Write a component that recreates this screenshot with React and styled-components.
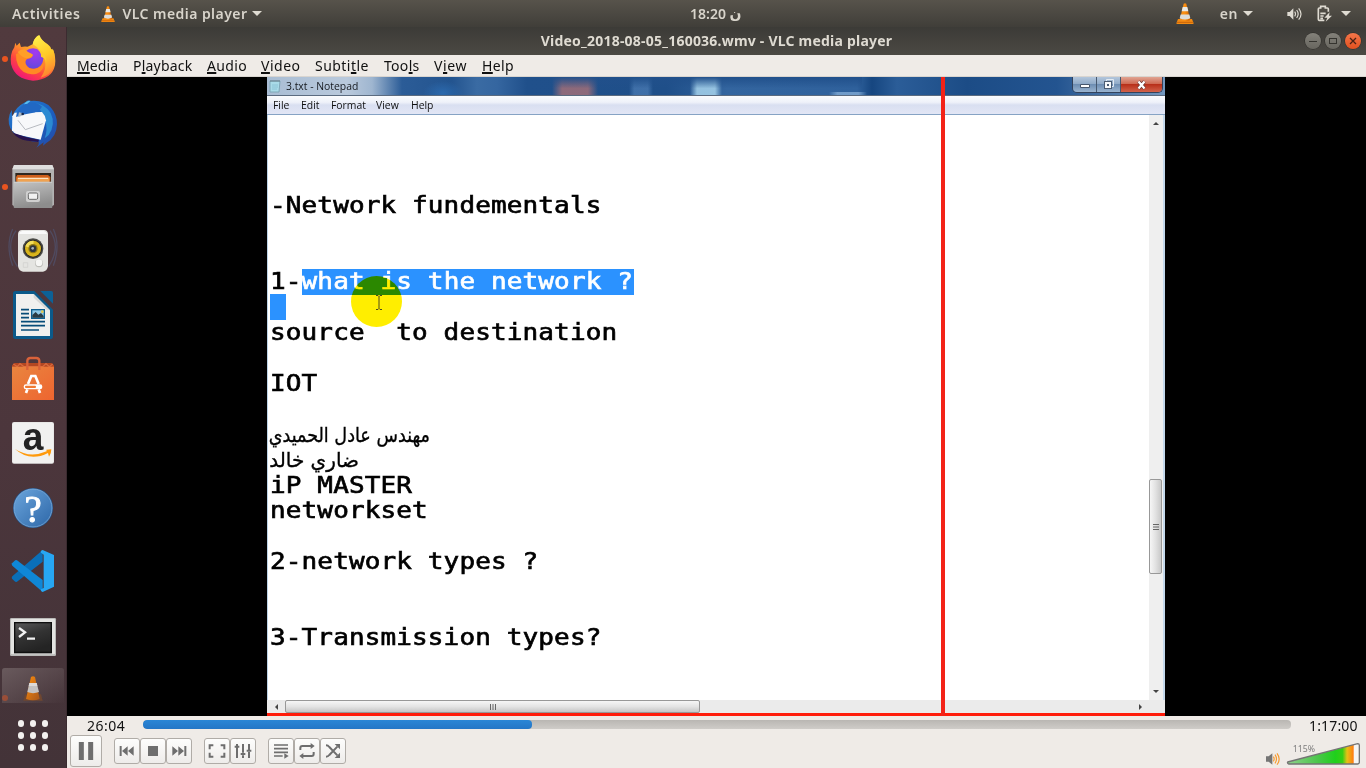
import React from "react";
import styled, { createGlobalStyle, css } from "styled-components";

const ui = '"Noto Sans", "Open Sans", "DejaVu Sans", sans-serif';

const GlobalStyle = createGlobalStyle`
  * { box-sizing: border-box; }
  body { margin: 0; overflow: hidden; background: #000; font-family: ${ui}; }
  svg { display: block; flex: none; }
`;

const Desktop = styled.div`
  width: 1366px;
  height: 768px;
  display: flex;
  flex-direction: column;
`;

/* ---------- top panel ---------- */
const TopPanel = styled.header`
  height: 27px;
  flex: none;
  display: grid;
  grid-template-columns: 690px 54px 1fr;
  align-items: center;
  background: linear-gradient(#57534b, #403e39);
  color: #d8d4cb;
  font-size: 14px;
  font-weight: 600;
`;

const PanelSide = styled.div`
  display: flex;
  align-items: center;
  height: 27px;
  padding-left: ${(p) => (p.$end ? 0 : "12px")};
  padding-right: ${(p) => (p.$end ? "15px" : 0)};
  justify-content: ${(p) => (p.$end ? "flex-end" : "flex-start")};
`;

const PanelText = styled.span`
  white-space: pre;
  letter-spacing: ${(p) => p.$track || 0}px;
  margin-left: ${(p) => p.$gap || 0}px;
  font-size: ${(p) => p.$size || 14}px;
`;

const Caret = styled.i`
  width: 0;
  height: 0;
  margin-left: ${(p) => p.$gap}px;
  border: 5px solid transparent;
  border-top-color: #dfdbd2;
  border-bottom: 0;
`;

const IconSlot = styled.span`
  display: flex;
  margin-left: ${(p) => p.$gap}px;
`;

/* ---------- body ---------- */
const Body = styled.div`
  flex: 1;
  min-height: 0;
  display: flex;
`;

const Dock = styled.nav`
  width: 67px;
  flex: none;
  display: flex;
  flex-direction: column;
  background: linear-gradient(#513a3e, #4c363c 55%, #433338);
  border-right: 1px solid #3b2b30;
`;

const DockItem = styled.div`
  position: relative;
  height: ${(p) => p.$h || 64}px;
  flex: none;
  padding-left: 1px;
  ${(p) =>
    p.$running &&
    css`
      &::before {
        content: "";
        position: absolute;
        left: 2px;
        top: ${p.$running}px;
        width: 6px;
        height: 6px;
        border-radius: 50%;
        background: #e95420;
        opacity: ${p.$h ? 0.45 : 1};
      }
    `}
`;

const AppGrid = styled.div`
  display: grid;
  grid-template-columns: repeat(3, 7px);
  grid-auto-rows: 7px;
  gap: 5px;
  padding: 17px 0 0 17.5px;
`;

const GridDot = styled.i`
  width: 6.5px;
  height: 6.5px;
  border-radius: 50%;
  background: #f3f1ef;
`;

const Window = styled.main`
  flex: 1;
  min-width: 0;
  display: flex;
  flex-direction: column;
`;

const TitleBar = styled.div`
  height: 28px;
  flex: none;
  display: grid;
  grid-template-columns: 1fr auto 1fr;
  align-items: center;
  background: linear-gradient(#3c3b37, #4b4943);
  color: #dfdbd2;
  font-size: 14px;
  font-weight: 700;
`;

const Title = styled.span`
  letter-spacing: 0.22px;
  font-size: 14px;
  white-space: nowrap;
  padding-bottom: 2px;
`;

const WindowButtons = styled.div`
  display: flex;
  justify-content: flex-end;
  gap: 4px;
  padding-right: 5px;
`;

const RoundButton = styled.span`
  width: 16px;
  height: 16px;
  border-radius: 50%;
  background: ${(p) => (p.$close ? "linear-gradient(#f4764a, #e2511f)" : "linear-gradient(#83817a, #68665f)")};
  box-shadow: 0 0 0 0.5px #2b2a27;
`;

const MenuBar = styled.div`
  height: 22px;
  flex: none;
  display: flex;
  gap: 14px;
  padding-left: 10px;
  align-items: center;
  background: #efebe7;
  border-bottom: 1px solid #d9d5d0;
  color: #101010;
  font-size: 14px;
`;

const MenuItem = styled.span`
  width: ${(p) => p.$w}px;
  white-space: nowrap;
  letter-spacing: ${(p) => p.$track || 0}px;
  u { text-underline-offset: 1px; text-decoration-thickness: 1.5px; text-decoration-skip-ink: none; }
`;

/* ---------- video ---------- */
const Stage = styled.section`
  flex: 1;
  min-height: 0;
  background: #000;
  padding-left: 200px;
`;

const Frame = styled.div`
  position: relative;
  width: 898px;
  height: 639px;
  display: flex;
  flex-direction: column;
  background: #fff;
  border-bottom: 3px solid #ff1c0a;
`;

const GuideLine = styled.i`
  position: absolute;
  left: 674px;
  top: 0;
  width: 4px;
  height: 639px;
  background: #f32318;
`;

const smudge = (color, x, y, w) =>
  `linear-gradient(90deg, transparent, ${color} 22%, ${color} 78%, transparent) ${x}px ${y}px / ${w}px 19px no-repeat`;

const PadTitle = styled.div`
  height: 19px;
  flex: none;
  display: flex;
  align-items: center;
  padding-left: 2px;
  gap: 5px;
  font: 10.4px "Open Sans", sans-serif;
  color: #15191f;
  border-bottom: 1px solid #5b6b80;
  background:
    linear-gradient(rgba(33, 80, 139, 1), rgba(33, 80, 139, 0) 60%) 285px 0 / 310px 19px no-repeat,
    ${smudge("rgba(160, 110, 120, .85)", 285, 0, 46)},
    ${smudge("rgba(160, 205, 232, .9)", 423, 0, 32)},
    ${smudge("rgba(110, 160, 215, .4)", 362, 0, 24)},
    ${smudge("rgba(140, 180, 220, .7)", 562, 15, 38)},
    radial-gradient(ellipse 20px 12px at 176px 16px, rgba(45, 110, 180, 0.8), transparent),
    linear-gradient(90deg, #a9bdd4 0, #b9c9dc 80px, #9fb6d0 105px, #2b5c97 135px, #23548f 185px, #3a6ba3 210px, #3566a0 230px, #20508b 260px, #1f4f89 400px, #33659f 460px, #2f619c 590px, #164680 605px, #2b5d98 630px, #1c4c86 700px, #235490 790px, #7397be 898px);
`;

const PadTitleText = styled.span`
  flex: 1;
  white-space: nowrap;
`;

const PadButtons = styled.div`
  display: flex;
  align-self: flex-start;
  height: 16px;
  margin-right: 2px;
  border: 1px solid #33435c;
  border-top: 0;
  border-radius: 0 0 5px 5px;
  overflow: hidden;
`;

const PadButton = styled.span`
  width: ${(p) => p.$w}px;
  display: flex;
  align-items: center;
  justify-content: center;
  border-right: ${(p) => (p.$close ? 0 : "1px solid #46586f")};
  background: ${(p) =>
    p.$close
      ? "linear-gradient(#e0a493, #cf6a52 45%, #b8301a 50%, #d2624a)"
      : "linear-gradient(#b3c6dc, #91abc8 45%, #6e8eb3 50%, #9ab4d0)"};
`;

const PadMenu = styled.div`
  height: 19px;
  flex: none;
  display: flex;
  align-items: center;
  padding: 0 0 1px 6px;
  font: 10.4px "Open Sans", sans-serif;
  color: #101010;
  background: linear-gradient(#fbfcfe, #eef1f9 35%, #d9dff1 50%, #e2e6f5);
  border-bottom: 1px solid #86a3c4;
`;

const PadMenuItem = styled.span`
  width: ${(p) => p.$w}px;
`;

const PadBody = styled.div`
  flex: 1;
  min-height: 0;
  display: flex;
  border-left: 1px solid #bcd3e6;
  border-right: 2px solid #c5d9ec;
`;

const Editor = styled.div`
  flex: 1;
  position: relative;
  padding: 77.5px 0 0 2px;
  background: #fff;
  color: #000;
`;

const Line = styled.div`
  height: 25.47px;
  line-height: 25.47px;
  white-space: pre;
  display: flex;
`;

const Latin = styled.span`
  display: block;
  height: 25.47px;
  font: 26px/25.47px "DejaVu Sans Mono", monospace;
  letter-spacing: 0.13px;
  -webkit-text-stroke: 0.75px currentColor;
  transform: scaleY(0.88);
`;

const Selected = styled.span`
  display: block;
  height: 26px;
  min-width: 16px;
  padding-right: ${(p) => (p.$blank ? 0 : "1px")};
  background: #2b92ff;
  color: #fff;
`;

const Arabic = styled.span`
  font: 20px/27px "DejaVu Sans", sans-serif;
  width: ${(p) => p.$w}px;
  direction: rtl;
  transform: scaleX(${(p) => p.$stretch});
  transform-origin: right center;
  -webkit-text-stroke: 0.35px currentColor;
`;

const Spotlight = styled.i`
  position: absolute;
  left: 83px;
  top: 161px;
  width: 51px;
  height: 51px;
  border-radius: 50%;
  background: #ffee00;
  mix-blend-mode: multiply;
`;

const TextCursor = styled.svg`
  position: absolute;
  left: 107px;
  top: 180px;
`;

const VScroll = styled.div`
  width: 14px;
  flex: none;
  display: flex;
  flex-direction: column;
  align-items: center;
  background: #efefef;
  padding: 6px 1px 6px 0;
`;

const VThumb = styled.div`
  width: 13px;
  height: 95px;
  margin: 354px 0 auto;
  display: flex;
  align-items: center;
  justify-content: center;
  border: 1px solid #989898;
  border-radius: 2px;
  background: linear-gradient(90deg, #f6f6f6, #e2e2e2 50%, #c9c9c9);
`;

const HScroll = styled.div`
  height: 13px;
  flex: none;
  display: flex;
  align-items: center;
  background: #ebebeb;
  padding: 0 22px 0 7px;
`;

const HThumb = styled.div`
  width: 415px;
  height: 13px;
  margin: 0 auto 0 7px;
  display: flex;
  align-items: center;
  justify-content: center;
  border: 1px solid #989898;
  border-radius: 2px;
  background: linear-gradient(#f6f6f6, #e4e4e4 50%, #c6c6c6);
`;

/* ---------- player controls ---------- */
const Controls = styled.footer`
  height: 52px;
  flex: none;
  background: #efebe7;
  color: #111;
`;

const SeekRow = styled.div`
  height: 19px;
  display: flex;
  align-items: center;
  padding: 0 8px 0 20px;
  font-size: 14px;
`;

const Time = styled.span`
  width: ${(p) => p.$w}px;
  letter-spacing: ${(p) => p.$track}px;
  white-space: nowrap;
`;

const SeekTrack = styled.div`
  flex: 1;
  height: 9px;
  margin: 0 18px 2px 0;
  border-radius: 4px;
  overflow: hidden;
  background: linear-gradient(#b9b6b2, #cfccc8);
`;

const SeekFill = styled.div`
  height: 9px;
  border-radius: 4px;
  background: linear-gradient(#2a86d6, #2476c6);
`;

const ButtonRow = styled.div`
  height: 33px;
  display: flex;
  align-items: center;
  padding: 0 0 1px 3px;
`;

const ButtonGroup = styled.div`
  display: flex;
  margin-left: 12px;
`;

const ControlButton = styled.span`
  width: ${(p) => (p.$big ? 32 : 26)}px;
  height: ${(p) => (p.$big ? 32 : 26)}px;
  display: flex;
  align-items: center;
  justify-content: center;
  border: 1px solid #b0aca7;
  border-radius: 3px;
  background: linear-gradient(#fdfdfc, #eeecea);
`;

const Spacer = styled.i`
  flex: 1;
`;

const Cone = ({ w, h }) => (
  <svg width={w} height={h} viewBox="0 0 54 62" preserveAspectRatio="none">
    <defs>
      <linearGradient id="cone" x1="0" x2="1">
        <stop offset="0" stopColor="#f08a1c" />
        <stop offset=".5" stopColor="#fb8f10" />
        <stop offset="1" stopColor="#c95e06" />
      </linearGradient>
    </defs>
    <path d="M6 47h42l5 13q0 2-3 2H4q-3 0-3-2z" fill="#f38b12" />
    <path d="M23 2q4-3 8 0l12 48q-16 8-32 0z" fill="url(#cone)" />
    <path d="M20 12h14l3 12H17z" fill="#e8e8e6" />
    <path d="M14 34h26l3 11q-16 8-32 0z" fill="#dcdcda" />
    <path d="M3 57h48" stroke="#c8630a" strokeWidth="3" />
  </svg>
);

const Firefox = () => (
  <svg width="64" height="64" viewBox="3 -3 192 192">
    <defs>
      <linearGradient id="ffBody" x1=".85" y1=".1" x2=".3" y2="1">
        <stop offset="0" stopColor="#ffe843" />
        <stop offset=".4" stopColor="#ff9a2a" />
        <stop offset=".7" stopColor="#ff4540" />
        <stop offset="1" stopColor="#f0147a" />
      </linearGradient>
      <linearGradient id="ffTail" x1="0" y1="0" x2=".3" y2="1">
        <stop offset="0" stopColor="#fff44f" />
        <stop offset=".6" stopColor="#ffc928" />
        <stop offset="1" stopColor="#ff8b30" />
      </linearGradient>
      <radialGradient id="ffGlobe" cx=".6" cy=".2" r=".9">
        <stop offset="0" stopColor="#a339f0" />
        <stop offset="1" stopColor="#5b4ad8" />
      </radialGradient>
    </defs>
    <path d="M46 44l4 9 9-9 4 13q10-3 20-1l16-8q2-16 16-26 9 16 24 25 10 8 12 18l6-3q12 24 8 50-10 44-66 46-54-4-66-50-4-30 10-50z" fill="url(#ffBody)" />
    <path d="M98 48q3-17 20-27 7 18 25 28 11 8 11 18l6-2q8 22 1 50-10 28-39 34 20-26 12-56-10-29-36-45z" fill="url(#ffTail)" />
    <circle cx="99" cy="92" r="31" fill="url(#ffGlobe)" />
    <path d="M48 78q16-8 34-5l17 8q-2 10-18 12-8 8-2 18 10 14 26 11 20-3 25-23 6 28-20 38-40 8-56-25-7-16-6-34z" fill="#ff8a24" />
    <path d="M53 72q9-9 21-9 7 9 24 16-1 9-17 12-15-2-28-19z" fill="#ff9f28" />
    <path d="M112 64q24 5 27 35-5-10-16-13 2-11-11-22z" fill="#ffcb2d" />
  </svg>
);

const Thunderbird = () => (
  <svg width="64" height="64" viewBox="3 186 192 192">
    <defs>
      <linearGradient id="tb" x1="0" x2="1" y2="1">
        <stop offset="0" stopColor="#2a7fd0" />
        <stop offset=".5" stopColor="#1b62c2" />
        <stop offset="1" stopColor="#2549a6" />
      </linearGradient>
    </defs>
    <path d="M77 219q8-8 14-3 40-4 62 20 18 20 18 50-1 38-32 56l-10 8 2-10-22 16q8-8 8-16-40-4-67-20-26-20-24-50 1-16 10-27-2 13 2 19 6-26 37-42z" fill="url(#tb)" />
    <path d="M100 222q34 2 52 30 16 34-6 66l-12 10q10-26 2-52-8-32-36-54z" fill="#2b8ad2" />
    <path d="M37 262l7-11 82-2q10 10 12 25l-16 58-75-16-11-12z" fill="#f7f8fa" />
    <path d="M54 274l22 28 52-18" fill="none" stroke="#a9adb5" strokeWidth="2.5" />
    <path d="M39 311q36 14 78 21l-2 7-33-4q-30-5-43-24z" fill="#28134e" />
    <path d="M48 264q2-28 34-43 30-4 44 12-8 16-34 20-26 4-44 11z" fill="#2168c4" />
    <path d="M54 264l3-14 13 3q-3 9-16 11z" fill="#a6b4c0" />
    <circle cx="68" cy="255" r="4" fill="#12264f" />
    <path d="M72 226q4-10 20-11l-10 9z" fill="#5ac0ee" />
  </svg>
);

const Files = () => (
  <svg width="64" height="64" viewBox="3 381 192 192">
    <defs>
      <linearGradient id="cab" y2="1" x2=".3">
        <stop offset="0" stopColor="#c4c4c4" />
        <stop offset="1" stopColor="#8d8d8d" />
      </linearGradient>
    </defs>
    <path d="M37 423l5-12h115l5 12v108l-7 4H43l-6-4z" fill="#b2b2b2" />
    <path d="M42 411h115l5 13H37z" fill="#dedede" />
    <path d="M46 435h107v28H46z" fill="#30271f" />
    <path d="M48 447l4-6h92l7 6v14H48z" fill="#cf5f1b" />
    <path d="M52 449h96v13H52z" fill="#f0a250" />
    <path d="M54 451h90" stroke="#fff0da" strokeWidth="3" />
    <rect x="41" y="461" width="116" height="79" rx="3" fill="url(#cab)" />
    <path d="M42 463h114" stroke="#d5d5d5" strokeWidth="2" />
    <rect x="78" y="489" width="42" height="33" rx="6" fill="#d0d0d0" />
    <rect x="85" y="495" width="28" height="19" rx="4" fill="#f1f1f1" stroke="#6a6a6a" strokeWidth="3" />
  </svg>
);

const Rhythmbox = () => (
  <svg width="64" height="64" viewBox="3 573 192 192">
    <g fill="none" stroke="#52618a" strokeWidth="4" opacity=".45">
      <path d="M48 608q-34 48 4 108M38 603q-22 50 0 110M150 608q34 50-4 108M160 603q22 50 0 110" />
    </g>
    <path d="M66 606h66q11 0 12 12v96q-2 15-15 17H69q-13-2-15-17v-96q1-12 12-12z" fill="#e4e4e1" />
    <path d="M67 609h64q9 2 10 9H57q1-7 10-9z" fill="#fafafa" />
    <circle cx="99" cy="662" r="31" fill="#4a4a46" />
    <circle cx="99" cy="662" r="27" fill="#262626" />
    <circle cx="99" cy="662" r="24" fill="#d8b41c" />
    <path d="M76 655a24 24 0 0 1 25-17l-2 24z" fill="#f2dd5c" />
    <circle cx="99" cy="662" r="14" fill="#8f7712" />
    <circle cx="99" cy="662" r="10" fill="#2f353c" />
    <circle cx="98" cy="661" r="4" fill="#a8b1b8" />
    <circle cx="117" cy="706" r="12" fill="#bdbdb9" />
    <circle cx="117" cy="704" r="10" fill="#f6f6f4" />
    <path d="M70 704h13v14H70z" fill="none" stroke="#cfcfcb" strokeWidth="2" />
  </svg>
);

const Writer = () => (
  <svg width="64" height="64" viewBox="3 15 192 192">
    <path d="M45 39h58l56 56v82q0 5-5 6H45q-6-1-6-6V45q0-5 6-6z" fill="#0b5a8a" />
    <path d="M121 39h33q5 0 5 5v33z" fill="#0d6196" />
    <path d="M48 48h53l49 49v77H48z" fill="#f0f0ee" />
    <path d="M101 48l49 49-10-2-39-36z" fill="#d8d8d6" />
    <path d="M63 95h24M63 107h24M63 119h24M63 131h72M63 143h72M63 156h54" stroke="#074c78" strokeWidth="5" />
    <rect x="93" y="93" width="42" height="30" fill="#0e5e8f" />
    <rect x="97" y="97" width="34" height="22" fill="#8ec9e8" />
    <path d="M97 119v-8l10-9 8 8 8-5 8 9v5z" fill="#2b3c44" />
    <circle cx="127" cy="101" r="4" fill="#e8c94a" />
  </svg>
);

const Software = () => (
  <svg width="64" height="64" viewBox="3 207 192 192">
    <defs>
      <linearGradient id="bag" y2="1">
        <stop offset="0" stopColor="#e9853f" />
        <stop offset="1" stopColor="#ee6530" />
      </linearGradient>
    </defs>
    <path d="M36 262l7-7h112l7 7v7H36z" fill="#b34722" />
    <path d="M40 258l12 8 8-9 12 9h56l10-9 10 9 10-8" fill="none" stroke="#d8693d" strokeWidth="4" />
    <rect x="36" y="266" width="126" height="100" fill="url(#bag)" />
    <path d="M82 276v-28q1-8 9-8h18q8 0 9 8v28" fill="none" stroke="#d9623a" strokeWidth="7" />
    <path d="M78 345l4-11M120 345l-4-11M84 318l10-24h12l10 24" fill="none" stroke="#fff" strokeWidth="8" />
    <rect x="71" y="319" width="56" height="15" rx="7" fill="#fff" />
    <rect x="75" y="323" width="33" height="7" rx="3" fill="#f07a32" />
  </svg>
);

const Amazon = () => (
  <svg width="64" height="64" viewBox="3 399 192 192">
    <rect x="36" y="432" width="126" height="125" rx="6" fill="#e4e4e3" />
    <rect x="38" y="434" width="122" height="121" rx="5" fill="#f1f1f0" />
    <text x="68" y="517" fontSize="119" fontWeight="700" fontFamily="Liberation Sans, sans-serif" textLength="62" lengthAdjust="spacingAndGlyphs" fill="#232323">a</text>
    <path d="M45 513q44 29 95 7l-1-5 15-1q0 13-7 22l-3-11q-55 28-99-12z" fill="#ff9a0c" />
  </svg>
);

const Help = () => (
  <svg width="64" height="64" viewBox="3 591 192 192">
    <defs>
      <linearGradient id="help" y2="1">
        <stop offset="0" stopColor="#6ba5dc" />
        <stop offset="1" stopColor="#2d67a8" />
      </linearGradient>
    </defs>
    <circle cx="99" cy="690" r="60" fill="#24568f" />
    <circle cx="99" cy="690" r="57" fill="url(#help)" stroke="#8db9e4" strokeWidth="2" />
    <text x="99" y="731" fontSize="116" fontFamily="Liberation Serif, serif" textAnchor="middle" fill="#fff" stroke="#fff" strokeWidth="3">?</text>
  </svg>
);

const Code = () => (
  <svg width="64" height="64" viewBox="3 33 192 192">
    <path d="M128 66v35L51 161q-4 2-7-1l-8-8q-2-4 1-7z" fill="#0a6fb8" />
    <path d="M128 192v-36L51 97q-4-2-7 1l-8 8q-2 4 1 7z" fill="#0f87d6" />
    <path d="M128 66q-8 2-5 8l8 6v100l-8 4q-2 6 5 8l34-16V81z" fill="#27a7f3" />
  </svg>
);

const Terminal = () => (
  <svg width="64" height="64" viewBox="3 225 192 192">
    <defs>
      <linearGradient id="term" x2=".4" y2="1">
        <stop offset="0" stopColor="#585858" />
        <stop offset=".5" stopColor="#333" />
        <stop offset="1" stopColor="#242424" />
      </linearGradient>
    </defs>
    <rect x="30" y="270" width="138" height="114" rx="4" fill="#b9b9b7" />
    <rect x="33" y="273" width="132" height="106" rx="3" fill="#e3e3e1" />
    <rect x="42" y="282" width="114" height="94" fill="#0f0f0f" />
    <rect x="46" y="286" width="106" height="85" fill="url(#term)" />
    <path d="M57 300l18 13-18 14M81 332h24" fill="none" stroke="#f2f2f2" strokeWidth="7" />
  </svg>
);

const DockVlc = () => (
  <svg width="64" height="36" viewBox="3 417 192 108">
    <defs>
      <linearGradient id="tile" y2="1">
        <stop offset="0" stopColor="#695a5d" />
        <stop offset="1" stopColor="#695a5d" stopOpacity="0" />
      </linearGradient>
      <linearGradient id="vlcFade" y2="1">
        <stop offset="0" stopColor="#fb8c0c" />
        <stop offset="1" stopColor="#a8561b" />
      </linearGradient>
    </defs>
    <rect x="6" y="420" width="186" height="110" rx="8" fill="url(#tile)" />
    <path d="M75 499h48l5 19H70z" fill="#6f4731" />
    <path d="M93 447q6-4 12 0l14 66q-20 8-41 0z" fill="url(#vlcFade)" />
    <path d="M88 465h22l7 27q-18 7-35 0z" fill="#c4c1c1" />
    <path d="M88 465h22l2 9H86z" fill="#dedad8" />
  </svg>
);

const dockApps = [
  { id: "firefox", Icon: Firefox, running: 29 },
  { id: "thunderbird", Icon: Thunderbird },
  { id: "files", Icon: Files, running: 29 },
  { id: "rhythmbox", Icon: Rhythmbox },
  { id: "writer", Icon: Writer },
  { id: "software", Icon: Software },
  { id: "amazon", Icon: Amazon },
  { id: "help", Icon: Help },
  { id: "code", Icon: Code },
  { id: "terminal", Icon: Terminal },
  { id: "vlc", Icon: DockVlc, running: 28, h: 36 },
];

const menus = [
  ["", "M", "edia", 42, 0.1],
  ["P", "l", "ayback", 60, 0.2],
  ["", "A", "udio", 40, 0.35],
  ["", "V", "ideo", 40, 0.5],
  ["Subti", "t", "le", 55, 0.45],
  ["Too", "l", "s", 36, 0.3],
  ["V", "i", "ew", 34, 0.6],
  ["", "H", "elp", 34, 0.4],
];

const documentLines = [
  { text: "-Network fundementals" },
  {},
  {},
  { text: "1-", selected: "what is the network ?" },
  { selected: " " },
  { text: "source  to destination" },
  {},
  { text: "IOT" },
  {},
  { arabic: "مهندس عادل الحميدي", w: 160, stretch: 0.88 },
  { arabic: "ضاري خالد", w: 89, stretch: 1 },
  { text: "iP MASTER" },
  { text: "networkset" },
  {},
  { text: "2-network types ?" },
  {},
  {},
  { text: "3-Transmission types?" },
];

const Glyph = ({ w = 26, children }) => (
  <svg width={w} height={w} viewBox={`0 0 ${w * 3} ${w * 3}`} fill="none" stroke="#6e6e6e" strokeWidth="6">
    {children}
  </svg>
);

function Notepad() {
  return (
    <Frame>
      <PadTitle>
        <svg width="12" height="14" viewBox="0 0 12 14">
          <path d="M1 2h10l-1 11H1z" fill="#a9dbe8" stroke="#7fa7b8" />
          <path d="M2 1v2M4 1v2M6 1v2M8 1v2M10 1v2" stroke="#56656e" strokeWidth=".7" />
          <path d="M3 6h6M3 8h6M3 10h5" stroke="#8cc4d6" />
        </svg>
        <PadTitleText>3.txt - Notepad</PadTitleText>
        <PadButtons>
          <PadButton $w={24}>
            <svg width="10" height="6"><path d="M.5 2.5h9v3h-9z" fill="#fff" stroke="#46566c" /></svg>
          </PadButton>
          <PadButton $w={24}>
            <svg width="11" height="11">
              <path d="M3.5 2V.5h7v7H9" fill="none" stroke="#e3eaf2" />
              <rect x="1.5" y="2.5" width="7" height="7" fill="#f5f8fb" stroke="#4b5c73" />
              <rect x="4" y="5" width="2" height="2" fill="#4b5c73" />
            </svg>
          </PadButton>
          <PadButton $w={41} $close>
            <svg width="12" height="10">
              <path d="M2.5 1.5l6 7M8.5 1.5l-6 7" stroke="#6e3b36" strokeWidth="3.6" />
              <path d="M2.5 1.5l6 7M8.5 1.5l-6 7" stroke="#fff" strokeWidth="2.2" />
            </svg>
          </PadButton>
        </PadButtons>
      </PadTitle>
      <PadMenu>
        <PadMenuItem $w={28}>File</PadMenuItem>
        <PadMenuItem $w={30}>Edit</PadMenuItem>
        <PadMenuItem $w={45}>Format</PadMenuItem>
        <PadMenuItem $w={35}>View</PadMenuItem>
        <PadMenuItem $w={30}>Help</PadMenuItem>
      </PadMenu>
      <PadBody>
        <Editor>
          {documentLines.map((line, i) => (
            <Line key={i}>
              {line.text && <Latin>{line.text}</Latin>}
              {line.selected && (
                <Selected $blank={line.selected === " "}><Latin>{line.selected}</Latin></Selected>
              )}
              {line.arabic && <Arabic $w={line.w} $stretch={line.stretch}>{line.arabic}</Arabic>}
            </Line>
          ))}
          <Spotlight />
          <TextCursor width="8" height="15" fill="none" stroke="#4c4a20">
            <path d="M1 .5h2l1 1 1-1h2M4 1.5v12M1 14.5h2l1-1 1 1h2" />
          </TextCursor>
        </Editor>
        <VScroll>
          <svg width="6" height="4"><path d="M0 4l3-3 3 3z" fill="#444" /></svg>
          <VThumb>
            <svg width="6" height="8"><path d="M0 1.5h6M0 4h6M0 6.5h6" stroke="#666" /></svg>
          </VThumb>
          <svg width="6" height="4"><path d="M0 0l3 3 3-3z" fill="#444" /></svg>
        </VScroll>
      </PadBody>
      <HScroll>
        <svg width="4" height="6"><path d="M4 0L1 3l3 3z" fill="#444" /></svg>
        <HThumb>
          <svg width="8" height="6"><path d="M1.5 0v6M4 0v6M6.5 0v6" stroke="#666" /></svg>
        </HThumb>
        <svg width="4" height="6"><path d="M0 0l3 3-3 3z" fill="#444" /></svg>
      </HScroll>
      <GuideLine />
    </Frame>
  );
}

function Player() {
  return (
    <Controls>
      <SeekRow>
        <Time $w={55.5} $track={0.5}>26:04</Time>
        <SeekTrack>
          <SeekFill style={{ width: "33.95%" }} />
        </SeekTrack>
        <Time $w={49} $track={0.15}>1:17:00</Time>
      </SeekRow>
      <ButtonRow>
        <ControlButton $big>
          <Glyph w={30}>
            <path d="M31 18v54M59 18v54" strokeWidth="15" />
          </Glyph>
        </ControlButton>
        <ButtonGroup>
          <ControlButton>
            <Glyph><path d="M20 24v30" /><path d="M41 25v28L24 39zM59 25v28L42 39z" fill="#6e6e6e" stroke="none" /></Glyph>
          </ControlButton>
          <ControlButton>
            <Glyph><rect x="24" y="24" width="30" height="30" fill="#6e6e6e" stroke="none" /></Glyph>
          </ControlButton>
          <ControlButton>
            <Glyph><path d="M58 24v30" /><path d="M19 25v28l17-14zM37 25v28l17-14z" fill="#6e6e6e" stroke="none" /></Glyph>
          </ControlButton>
        </ButtonGroup>
        <ButtonGroup>
          <ControlButton>
            <Glyph><path d="M28 22H17v12M50 22h11v12M28 56H17V44M50 56h11V44" /></Glyph>
          </ControlButton>
          <ControlButton>
            <Glyph><path d="M21 18v5M21 29v31M14 26h14M39 18v26M39 52v8M32 48h14M57 18v17M57 42v18M50 38h14" /></Glyph>
          </ControlButton>
        </ButtonGroup>
        <ButtonGroup>
          <ControlButton>
            <Glyph><path d="M18 21h42M18 32h42M18 43h42M18 54h26" strokeWidth="5" /><path d="M49 46v16l13-8z" fill="#6e6e6e" stroke="none" /></Glyph>
          </ControlButton>
          <ControlButton>
            <Glyph><path d="M19 36v-6q0-6 6-6h28M59 42v6q0 6-6 6H25" /><path d="M50 15v18l12-9zM28 45v18l-12-9z" fill="#6e6e6e" stroke="none" /></Glyph>
          </ControlButton>
          <ControlButton>
            <Glyph><path d="M18 22q6 0 10 5l24 25M18 56q6 0 10-5l24-25" /><path d="M44 18h16v16zM44 60h16V44z" fill="#6e6e6e" stroke="none" /></Glyph>
          </ControlButton>
        </ButtonGroup>
        <Spacer />
        <svg width="102" height="33" viewBox="594 135 306 99">
          <defs>
            <linearGradient id="vol" x2="1">
              <stop offset="0" stopColor="#8fd08c" />
              <stop offset=".45" stopColor="#4cc64c" />
              <stop offset=".72" stopColor="#1fd01c" />
              <stop offset=".83" stopColor="#35ce14" />
              <stop offset=".9" stopColor="#e8c016" />
              <stop offset="1" stopColor="#ff7a10" />
            </linearGradient>
          </defs>
          <path d="M600 199h8l11-9v34l-11-9h-8z" fill="#757575" />
          <path d="M622 200q5 7 0 14M627 194q9 13 0 26M633 190q13 17 0 34" fill="none" stroke="#f79a2e" strokeWidth="3.5" />
          <text x="680" y="186" fontSize="28" fontFamily="Noto Sans, sans-serif" fill="#7d7d7d" textLength="67" lengthAdjust="spacingAndGlyphs">115%</text>
          <path d="M665 216l210-55q5 0 5 5v51q0 5-5 5H668q-5-3-3-6z" fill="#f6f5f3" />
          <path d="M665 216l198-52v58H668z" fill="url(#vol)" />
          <path d="M665 216l210-55q5 0 5 5v51q0 5-5 5H668q-5-3-3-6z" fill="none" stroke="#747474" strokeWidth="4" />
        </svg>
      </ButtonRow>
    </Controls>
  );
}

export default function App() {
  return (
    <Desktop>
      <GlobalStyle />
      <TopPanel>
        <PanelSide>
          <PanelText $track={0.6}>Activities</PanelText>
          <IconSlot $gap={21}><Cone w={14} h={16} /></IconSlot>
          <PanelText $gap={7} $track={0.45}>VLC media player</PanelText>
          <Caret $gap={5} />
        </PanelSide>
        <PanelText $size={14} $track={0.4}>18:20 ن</PanelText>
        <PanelSide $end>
          <Cone w={18} h={21} />
          <PanelText $gap={26} $track={0.6}>en</PanelText>
          <Caret $gap={5} />
          <IconSlot $gap={34}>
            <svg width="16" height="14" viewBox="0 0 48 42" fill="none" stroke="#dfdbd2" strokeWidth="3.5">
              <path d="M1 15h7l11-11v34L8 27H1z" fill="#dfdbd2" stroke="none" />
              <path d="M23 14q5 7 0 14M29 9q9 12 0 24M35 4q14 17 0 34" />
            </svg>
          </IconSlot>
          <IconSlot $gap={14}>
            <svg width="16" height="17" viewBox="0 0 48 51" fill="none" stroke="#dfdbd2" strokeWidth="5">
              <path d="M22 46H6q-2 0-2-3V12q0-3 3-3h4V4h14v5h6q3 0 3 3v8M10 25h16M10 33h10M10 40h8" />
              <path d="M38 22L22 38h9l-5 12 19-18h-9z" fill="#dfdbd2" stroke="none" />
            </svg>
          </IconSlot>
          <Caret $gap={8} />
        </PanelSide>
      </TopPanel>
      <Body>
        <Dock>
          {dockApps.map(({ id, Icon, running, h }) => (
            <DockItem key={id} $running={running} $h={h}><Icon /></DockItem>
          ))}
          <AppGrid>
            {Array.from({ length: 9 }, (_, i) => <GridDot key={i} />)}
          </AppGrid>
        </Dock>
        <Window>
          <TitleBar>
            <span />
            <Title>Video_2018-08-05_160036.wmv - VLC media player</Title>
            <WindowButtons>
              <RoundButton><svg width="16" height="16"><path d="M4 8.5h8" stroke="#35342f" /></svg></RoundButton>
              <RoundButton><svg width="16" height="16"><rect x="4.5" y="5.5" width="7" height="5" fill="none" stroke="#35342f" /></svg></RoundButton>
              <RoundButton $close><svg width="16" height="16"><path d="M5 5l6 6M11 5l-6 6" stroke="#4a2114" strokeWidth="1.3" /></svg></RoundButton>
            </WindowButtons>
          </TitleBar>
          <MenuBar>
            {menus.map(([before, key, after, w, track]) => (
              <MenuItem key={before + key + after} $w={w} $track={track}>
                {before}<u>{key}</u>{after}
              </MenuItem>
            ))}
          </MenuBar>
          <Stage><Notepad /></Stage>
          <Player />
        </Window>
      </Body>
    </Desktop>
  );
}
